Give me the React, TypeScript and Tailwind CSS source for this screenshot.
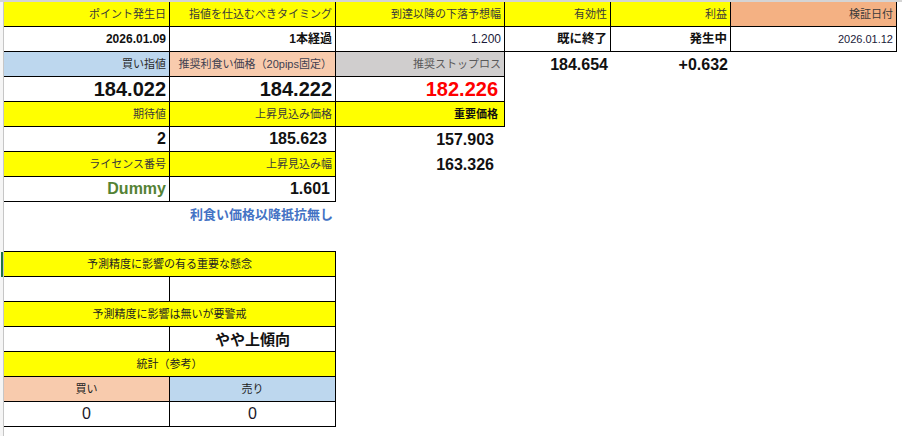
import React from 'react'

// column widths (border-right included)
const A = 'w-[166px]'
const B = 'w-[166px]'
const C = 'w-[169px]'
const D = 'w-[106px]'
const E = 'w-[120px]'
const F = 'w-[166px]'
const AB = 'w-[332px]'

const boxed = 'border-r border-b border-black'
const yellow = 'bg-[#ffff00] text-[11px] text-[#3a3a3a]'

function Cell({
  w,
  className = '',
  align = 'right',
  children,
}: {
  w: string
  className?: string
  align?: 'right' | 'center'
  children?: React.ReactNode
}) {
  return (
    <div
      className={`${w} h-[25px] shrink-0 flex items-center leading-none whitespace-nowrap overflow-hidden ${
        align === 'right' ? 'justify-end pr-[3px]' : 'justify-center'
      } ${className}`}
    >
      {children}
    </div>
  )
}

function Row({ children }: { children: React.ReactNode }) {
  return <div className="flex h-[25px]">{children}</div>
}

export default function App() {
  return (
    <div className="w-[902px] h-[436px] overflow-hidden bg-white border-t-2 border-[#d4d4d4] font-['Liberation_Sans','Noto_Sans_CJK_JP',sans-serif] text-[#111]">
      <div className="flex h-full">
        {/* row header edge */}
        <div className="w-[4px] shrink-0 flex flex-col border-r border-[#c6c6c6] bg-[#f5f5f5]">
          <div className="h-[250px]" />
          <div className="h-[25px] border-r-2 border-[#217346]" />
        </div>

        <div className="flex flex-col">
          <Row>
            <Cell w={A} className={`${boxed} ${yellow}`}>ポイント発生日</Cell>
            <Cell w={B} className={`${boxed} ${yellow}`}>指値を仕込むべきタイミング</Cell>
            <Cell w={C} className={`${boxed} ${yellow}`}>到達以降の下落予想幅</Cell>
            <Cell w={D} className={`${boxed} ${yellow}`}>有効性</Cell>
            <Cell w={E} className={`${boxed} ${yellow}`}>利益</Cell>
            <Cell w={F} className={`${boxed} bg-[#f4b183] text-[11px] text-[#3a3a3a]`}>検証日付</Cell>
          </Row>
          <Row>
            <Cell w={A} className={`${boxed} text-[12px] font-bold`}>2026.01.09</Cell>
            <Cell w={B} className={`${boxed} text-[12px] font-bold`}>1本経過</Cell>
            <Cell w={C} className={`${boxed} text-[12px] text-[#1a1a3a]`}>1.200</Cell>
            <Cell w={D} className={`${boxed} text-[12.5px] font-bold`}>既に終了</Cell>
            <Cell w={E} className={`${boxed} text-[12.5px] font-bold`}>発生中</Cell>
            <Cell w={F} className={`${boxed} text-[11px] text-[#1a1a3a]`}>2026.01.12</Cell>
          </Row>
          <Row>
            <Cell w={A} className={`${boxed} bg-[#bdd7ee] text-[11px] text-[#2b2b2b]`}>買い指値</Cell>
            <Cell w={B} className={`${boxed} bg-[#f8cbad] text-[11px] text-[#404050]`}>推奨利食い価格（20pips固定）</Cell>
            <Cell w={C} className={`${boxed} bg-[#d0cece] text-[11px] text-[#595959]`}>推奨ストップロス</Cell>
            <Cell w={D} className="text-[16px] font-bold">184.654</Cell>
            <Cell w={E} className="text-[16px] font-bold">+0.632</Cell>
          </Row>
          <Row>
            <Cell w={A} className={`${boxed} text-[20px] font-bold`}>184.022</Cell>
            <Cell w={B} className={`${boxed} text-[20px] font-bold`}>184.222</Cell>
            <Cell w={C} className={`${boxed} text-[20px] font-bold text-[#ff0000] pr-[6px]`}>182.226</Cell>
          </Row>
          <Row>
            <Cell w={A} className={`${boxed} ${yellow}`}>期待値</Cell>
            <Cell w={B} className={`${boxed} ${yellow}`}>上昇見込み価格</Cell>
            <Cell w={C} className={`${boxed} bg-[#ffff00] text-[11px] font-bold text-[#111] pr-[6px]`}>重要価格</Cell>
          </Row>
          <Row>
            <Cell w={A} className={`${boxed} text-[16px] font-bold`}>2</Cell>
            <Cell w={B} className={`${boxed} text-[16px] font-bold pr-[8px]`}>185.623</Cell>
            <Cell w={C} className="text-[16px] font-bold pr-[11px]">157.903</Cell>
          </Row>
          <Row>
            <Cell w={A} className={`${boxed} ${yellow}`}>ライセンス番号</Cell>
            <Cell w={B} className={`${boxed} ${yellow}`}>上昇見込み幅</Cell>
            <Cell w={C} className="text-[16px] font-bold pr-[11px]">163.326</Cell>
          </Row>
          <Row>
            <Cell w={A} className={`${boxed} text-[16px] font-bold text-[#548235]`}>Dummy</Cell>
            <Cell w={B} className={`${boxed} text-[16px] font-bold pr-[5px]`}>1.601</Cell>
          </Row>
          <Row>
            <Cell w={A} />
            <Cell w={B} className="text-[13px] font-bold text-[#4472c4]">利食い価格以降抵抗無し</Cell>
          </Row>
          <Row>
            <Cell w={A} className="border-b border-black" />
            <Cell w={B} className="border-b border-black" />
          </Row>
          <Row>
            <Cell w={AB} align="center" className={`${boxed} ${yellow} text-[#222]`}>予測精度に影響の有る重要な懸念</Cell>
          </Row>
          <Row>
            <Cell w={A} className={boxed} />
            <Cell w={B} className={boxed} />
          </Row>
          <Row>
            <Cell w={AB} align="center" className={`${boxed} ${yellow} text-[#222]`}>予測精度に影響は無いが要警戒</Cell>
          </Row>
          <Row>
            <Cell w={A} className={boxed} />
            <Cell w={B} align="center" className={`${boxed} text-[15px] font-bold`}>やや上傾向</Cell>
          </Row>
          <Row>
            <Cell w={AB} align="center" className={`${boxed} ${yellow} text-[#222]`}>統計（参考）</Cell>
          </Row>
          <Row>
            <Cell w={A} align="center" className={`${boxed} bg-[#f8cbad] text-[11px] text-[#222]`}>買い</Cell>
            <Cell w={B} align="center" className={`${boxed} bg-[#bdd7ee] text-[11px] text-[#222]`}>売り</Cell>
          </Row>
          <Row>
            <Cell w={A} align="center" className={`${boxed} text-[16px] text-[#1a1a2a]`}>0</Cell>
            <Cell w={B} align="center" className={`${boxed} text-[16px] text-[#1a1a2a]`}>0</Cell>
          </Row>
        </div>
      </div>
    </div>
  )
}
